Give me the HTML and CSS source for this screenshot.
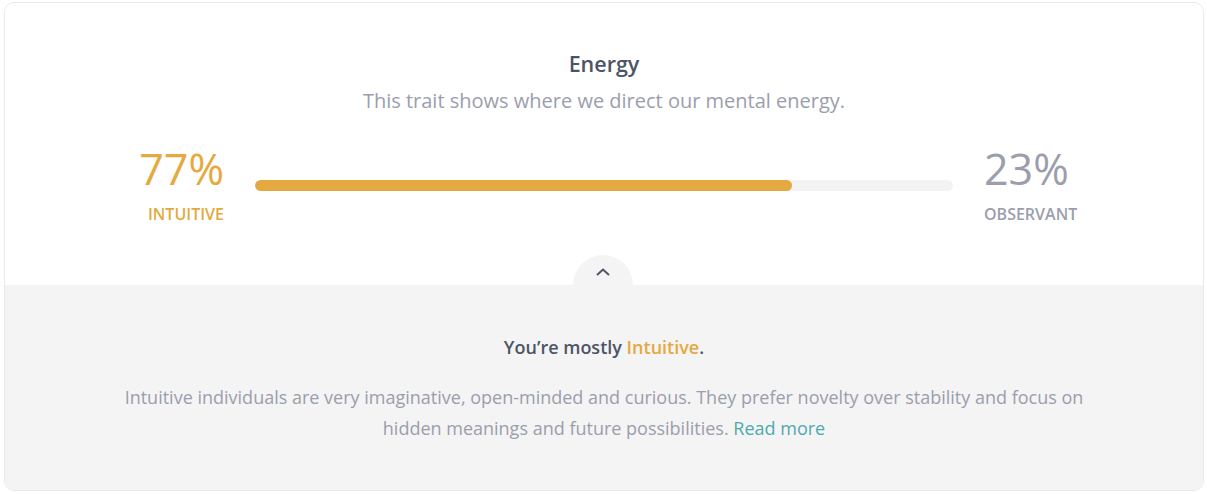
FILE: index.html
```html
<!DOCTYPE html>
<html lang="en">
<head>
<meta charset="utf-8">
<title>Energy trait</title>
<link rel="stylesheet" href="styles.css">
</head>
<body>
<div class="card">
  <section class="top">
    <h2 class="title">Energy</h2>
    <p class="subtitle">This trait shows where we direct our mental energy.</p>
    <div class="scale">
      <div class="side side-left">
        <div class="pct pct-left">77%</div>
        <div class="label label-left">INTUITIVE</div>
      </div>
      <div class="bar"><div class="fill" style="width:77%"></div></div>
      <div class="side side-right">
        <div class="pct pct-right">23%</div>
        <div class="label label-right">OBSERVANT</div>
      </div>
    </div>
  </section>
  <section class="bottom">
    <button class="toggle" aria-label="Collapse">
      <svg width="16" height="10" viewBox="0 0 16 10"><path d="M2 8 L8 2.5 L14 8" fill="none" stroke="#4d5466" stroke-width="2"/></svg>
    </button>
    <p class="mostly">You’re mostly <span class="hl">Intuitive</span>.</p>
    <p class="desc">Intuitive individuals are very imaginative, open-minded and curious. They prefer novelty over stability and focus on hidden meanings and future possibilities. <a href="#" class="more">Read more</a></p>
  </section>
</div>
</body>
</html>
```
FILE: styles.css
```css
* { box-sizing: border-box; }
body {
  margin: 0;
  padding: 2px 4px 0 4px;
  background: #fff;
  font-family: "Open Sans", "Liberation Sans", sans-serif;
}
.card {
  width: 1200px;
  height: 489px;
  border: 1px solid #e9e9e9;
  border-radius: 10px;
  overflow: hidden;
  display: flex;
  flex-direction: column;
}
.top {
  background: #fff;
  padding: 46px 99px 0 99px;
  height: 282px;
  text-align: center;
}
.title {
  margin: 0;
  font-size: 21.5px;
  font-weight: 600;
  color: #4d5466;
  line-height: 30px;
}
.subtitle {
  margin: 9px 0 0 0;
  font-size: 20px;
  color: #9b9eac;
  line-height: 26px;
}
.scale {
  display: flex;
  align-items: flex-start;
  gap: 31px;
  margin-top: 25px;
}
.side { width: 120px; flex: none; }
.side-left { text-align: right; }
.side-right { text-align: left; }
.pct {
  font-size: 43px;
  font-weight: 400;
  line-height: 60px;
}
.pct-left { color: #e4a940; }
.pct-right { color: #9b9eac; }
.label {
  font-size: 16px;
  font-weight: 600;
  line-height: 20px;
  margin-top: 5px;
}
.label-left { color: #e4a940; }
.label-right { color: #9b9eac; }
.bar {
  flex: 1;
  height: 11px;
  margin-top: 41px;
  background: #f3f3f3;
  border-radius: 6px;
  overflow: hidden;
}
.fill {
  height: 100%;
  background: #e4a940;
  border-radius: 6px;
}
.bottom {
  flex: 1;
  background: #f4f4f4;
  position: relative;
  text-align: center;
  padding: 50px 100px 0 100px;
}
.toggle {
  position: absolute;
  left: 50%;
  top: -30px;
  width: 60px;
  height: 60px;
  margin-left: -31px;
  border: none;
  border-radius: 50%;
  background: #f4f4f4;
  display: flex;
  justify-content: center;
  align-items: flex-start;
  padding: 12px 0 0 0;
  cursor: pointer;
}
.mostly {
  margin: 0;
  position: relative;
  font-size: 18px;
  font-weight: 600;
  color: #4d5466;
  line-height: 24px;
}
.hl { color: #e4a940; }
.desc {
  margin: 23px 0 0 0;
  font-size: 18px;
  color: #9b9eac;
  line-height: 31px;
}
.more {
  color: #4faaae;
  text-decoration: none;
}
```
